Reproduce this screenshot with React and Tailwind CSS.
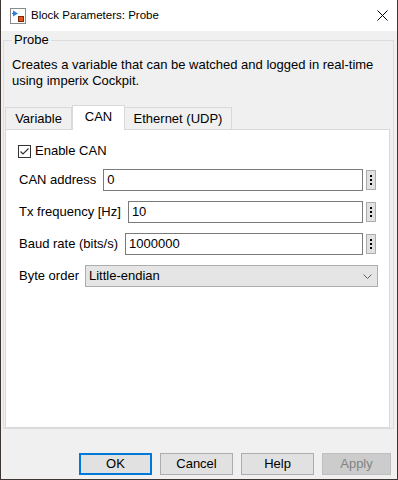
import React from 'react';

const FONT = { fontFamily: '"Liberation Sans", Arial, sans-serif' };

const BlockIcon = () => (
  <svg width="16" height="16" viewBox="0 0 16 16">
    <rect x="0.5" y="0.5" width="15" height="15" fill="#fff" stroke="#8a8a8a" />
    <path d="M3 2.5 L8 5.5 L3 8.5 Z" fill="#2f7fd8" />
    <line x1="2" y1="5.5" x2="3" y2="5.5" stroke="#2f7fd8" />
    <rect x="8.5" y="8.5" width="5" height="5" fill="#e8531c" stroke="#7a2a0a" />
  </svg>
);

const Ellipsis = () => (
  <div className="w-[10px] h-[20px] bg-[#e1e1e1] border border-[#adadad] flex flex-col items-center justify-center gap-[2px]">
    <span className="w-[2px] h-[2px] bg-black" />
    <span className="w-[2px] h-[2px] bg-black" />
    <span className="w-[2px] h-[2px] bg-black" />
  </div>
);

const Field = ({ label, value }) => (
  <div className="flex items-center h-[22px] gap-[7px]">
    <span className="whitespace-nowrap">{label}</span>
    <div className="flex-1 h-[22px] border border-[#7a7a7a] bg-white flex items-center pl-[3px]">
      {value}
    </div>
    <div className="ml-[-4px]">
      <Ellipsis />
    </div>
  </div>
);

const Button = ({ children, className }) => (
  <div className={`h-[22px] flex items-center justify-center ${className}`}>{children}</div>
);

export default function App() {
  return (
    <div
      className="w-[398px] h-[480px] flex flex-col bg-[#f0f0f0] border-x border-b border-[#3e3632] text-[13px] text-black"
      style={FONT}
    >
      <div className="h-[31px] bg-white flex items-center pl-[9px] pr-[9px] shrink-0">
        <BlockIcon />
        <span className="ml-[5px] text-[11.5px]">Block Parameters: Probe</span>
        <svg className="ml-auto" width="11" height="11" viewBox="0 0 11 11">
          <path d="M0.5 0.5 L10.5 10.5 M10.5 0.5 L0.5 10.5" stroke="#000" strokeWidth="1" />
        </svg>
      </div>

      <fieldset className="flex-1 flex flex-col mt-[1px] ml-[2px] mr-[3px] border border-[#dcdcdc] min-h-0">
        <legend className="ml-[8px] px-[2px] leading-[16px]">Probe</legend>
        <p className="mt-[9px] pl-[8px] leading-[16px]">
          Creates a variable that can be watched and logged in real-time
          <br />
          using imperix Cockpit.
        </p>

        <div className="flex items-end h-[24px] mt-[16px] ml-[1px]">
          <div className="w-[67px] h-[22px] border border-b-0 border-[#d9d9d9] flex items-center justify-center">
            Variable
          </div>
          <div className="relative z-10 w-[53px] h-[25px] mb-[-1px] bg-white border border-b-0 border-[#d9d9d9] flex items-center justify-center pb-[2px]">
            CAN
          </div>
          <div className="w-[107px] h-[22px] border border-l-0 border-b-0 border-[#d9d9d9] flex items-center justify-center">
            Ethernet (UDP)
          </div>
        </div>

        <div className="flex-1 ml-[1px] mr-[3px] bg-white border border-[#d9d9d9] pt-[13px] pl-[13px] pr-[13px] flex flex-col">
          <div className="flex items-center h-[16px] gap-[4px] ml-[-1px]">
            <div className="w-[13px] h-[13px] border border-[#333] bg-white flex items-center justify-center">
              <svg width="11" height="11" viewBox="0 0 11 11">
                <path d="M1.5 5.5 L4 8 L9.5 2.5" fill="none" stroke="#333" strokeWidth="1.2" />
              </svg>
            </div>
            <span>Enable CAN</span>
          </div>

          <div className="mt-[10px] flex flex-col gap-[10px]">
            <Field label="CAN address" value="0" />
            <Field label="Tx frequency [Hz]" value="10" />
            <Field label="Baud rate (bits/s)" value="1000000" />
            <div className="flex items-center h-[22px] gap-[6px] mr-[-2px]">
              <span className="whitespace-nowrap">Byte order</span>
              <div className="flex-1 h-[22px] border border-[#adadad] bg-[#e5e5e5] flex items-center pl-[3px] pr-[5px]">
                <span>Little-endian</span>
                <svg className="ml-auto" width="9" height="5" viewBox="0 0 9 5">
                  <path d="M0.5 0.5 L4.5 4.5 L8.5 0.5" fill="none" stroke="#606060" strokeWidth="1" />
                </svg>
              </div>
            </div>
          </div>
        </div>
      </fieldset>

      <div className="flex items-center mt-[24px] mb-[4px] pr-[6px] justify-end gap-[8px] shrink-0">
        <Button className="w-[73px] bg-[#e1e1e1] border-2 border-[#0078d7]">OK</Button>
        <Button className="w-[73px] bg-[#e1e1e1] border border-[#adadad]">Cancel</Button>
        <Button className="w-[73px] bg-[#e1e1e1] border border-[#adadad]">Help</Button>
        <Button className="w-[69px] bg-[#cccccc] border border-[#bfbfbf] text-[#838383]">Apply</Button>
      </div>
    </div>
  );
}
